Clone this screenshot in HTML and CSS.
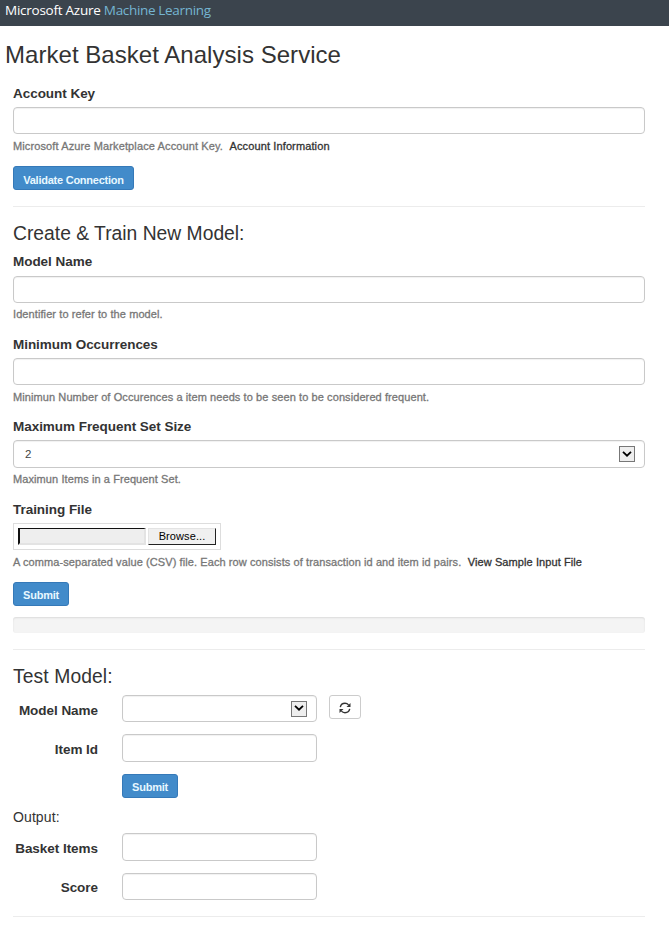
FILE: index.html
```html
<!DOCTYPE html>
<html lang="en">
<head>
<meta charset="utf-8">
<title>Market Basket Analysis Service</title>
<link rel="stylesheet" href="styles.css">
</head>
<body>
<header class="navbar"><span class="brand">Microsoft Azure</span> <span class="product">Machine Learning</span></header>
<h1 class="title">Market Basket Analysis Service</h1>
<main class="content">
  <section class="account">
    <label class="label" for="key">Account Key</label>
    <input class="control" id="key" type="text">
    <p class="help help-key">Microsoft Azure Marketplace Account Key.<a class="link">Account Information</a></p>
    <button class="btn btn-validate">Validate Connection</button>
  </section>
  <section class="train">
    <h2 class="heading">Create &amp; Train New Model:</h2>
    <div class="group g-name">
      <label class="label" for="name">Model Name</label>
      <input class="control" id="name" type="text">
      <p class="help">Identifier to refer to the model.</p>
    </div>
    <div class="group g-min">
      <label class="label" for="min">Minimum Occurrences</label>
      <input class="control" id="min" type="text">
      <p class="help">Minimun Number of Occurences a item needs to be seen to be considered frequent.</p>
    </div>
    <div class="group g-max">
      <span class="label">Maximum Frequent Set Size</span>
      <div class="control select tall"><span>2</span><span class="arrow"><svg viewBox="0 0 10 7"><path d="M1 .8 5 4.7 9 .8" /></svg></span></div>
      <p class="help">Maximun Items in a Frequent Set.</p>
    </div>
    <div class="group g-file">
      <span class="label">Training File</span>
      <div class="file"><span class="file-path"></span><button class="browse">Browse...</button></div>
      <p class="help">A comma-separated value (CSV) file. Each row consists of transaction id and item id pairs.<a class="link">View Sample Input File</a></p>
    </div>
    <button class="btn">Submit</button>
    <div class="progress"></div>
  </section>
  <section class="test">
    <h2 class="heading heading-test">Test Model:</h2>
    <div class="row r-model">
      <span class="label">Model Name</span>
      <div class="control select"><span></span><span class="arrow"><svg viewBox="0 0 10 7"><path d="M1 .8 5 4.7 9 .8" /></svg></span></div>
      <button class="refresh" aria-label="Refresh"><svg viewBox="0 0 12 12"><path class="arc" d="M1.3 5.1C1.8 2.7 3.8 1.3 6 1.3c1.5 0 2.7.6 3.6 1.6M10.7 6.9C10.2 9.3 8.2 10.7 6 10.7c-1.5 0-2.7-.6-3.6-1.6"/><path class="tip" d="M11.5.9v4H7.5zM.5 11.1v-4h4z"/></svg></button>
    </div>
    <div class="row r-item">
      <label class="label" for="item">Item Id</label>
      <input class="control tall" id="item" type="text">
    </div>
    <div class="row r-submit"><span></span><button class="btn">Submit</button></div>
    <p class="output">Output:</p>
    <div class="row r-basket">
      <label class="label" for="basket">Basket Items</label>
      <input class="control tall" id="basket" type="text">
    </div>
    <div class="row r-score">
      <label class="label" for="score">Score</label>
      <input class="control" id="score" type="text">
    </div>
  </section>
</main>
</body>
</html>
```
FILE: styles.css
```css
* { box-sizing: border-box; }
body { margin: 0; background: #fff; color: #333; font-family: "Liberation Sans", Arial, sans-serif; font-size: 13px; overflow: hidden; }
h1, h2, p { margin: 0; font-weight: normal; }
button, input { font-family: inherit; margin: 0; }
.navbar { height: 26px; padding-left: 5px; background: #3b444d; color: #fff; font: 13.5px/21px "Open Sans", "Noto Sans", sans-serif; letter-spacing: -.25px; white-space: nowrap; }
.product { color: #75b5d2; letter-spacing: -.33px; }
.title { height: 57px; padding: 14px 0 0 5px; font-size: 24px; line-height: 30px; letter-spacing: .04px; white-space: nowrap; }
.content { padding: 0 24px 0 13px; }
.label { display: block; height: 20px; margin-bottom: 4px; font-size: 13.5px; font-weight: bold; line-height: 21px; letter-spacing: -.04px; white-space: nowrap; }
.control { display: block; width: 100%; height: 27px; border: 1px solid #c9c9c9; border-radius: 4px; background: #fff; box-shadow: inset 0 1px 1px rgba(0, 0, 0, .06); outline: none; }
.tall { height: 28px; }
.select { display: flex; align-items: center; justify-content: space-between; padding: 0 9px 0 11px; font-size: 11.5px; color: #444; }
.arrow { display: flex; align-items: center; justify-content: center; width: 16px; height: 16px; background: #eee; border: 1px solid #777; }
.arrow svg { width: 10px; height: 7px; fill: none; stroke: #000; stroke-width: 1.8; }
.help { height: 16px; margin-top: 4px; font-size: 11px; line-height: 16px; letter-spacing: .09px; color: #777; white-space: nowrap; -webkit-text-stroke: .3px currentColor; }
.help-key { letter-spacing: .12px; }
.link { color: #333; margin-left: 6.5px; }
.btn { display: block; width: 56px; height: 24px; padding: 3px 0 0; border: 1px solid #3579b8; border-radius: 3px; background: #428bca; color: #e8f8ff; font-size: 11px; font-weight: bold; line-height: 17px; letter-spacing: -.24px; text-align: center; white-space: nowrap; }
.btn-validate { width: 121px; margin-top: 12px; padding-top: 4px; }
.account { height: 124px; border-bottom: 1px solid #ececec; }
.heading { height: 26px; font-size: 19.3px; line-height: 27px; white-space: nowrap; }
.heading-test { letter-spacing: .1px; }
.train { height: 443px; padding-top: 13px; border-bottom: 1px solid #ececec; }
.g-name { margin: 5px 0 12px; }
.g-name .label { margin-bottom: 5px; }
.g-name .help { margin-top: 3px; }
.g-min { margin-bottom: 11px; }
.g-max { margin-bottom: 12px; }
.g-max .help { margin-top: 3px; }
.g-file { margin-bottom: 12px; }
.file { display: flex; gap: 2px; width: 208px; height: 27px; padding: 4px; border: 1px solid #ddd; }
.file-path { width: 128px; height: 17px; background: #eee; border: 2px solid; border-color: #111 #e3e3e3 #e3e3e3 #111; border-top-width: 1.5px; }
.browse { width: 68px; height: 17px; padding: 0; background: #f0f0f0; border: 1px solid; border-color: #e3e3e3 #222 #222 #e3e3e3; font-size: 11px; line-height: 13px; letter-spacing: .1px; color: #000; }
.progress { height: 16px; margin-top: 11px; border-radius: 3px; background: #f4f4f4; box-shadow: inset 0 1px 2px rgba(0, 0, 0, .1); }
.test { height: 267px; padding-top: 13px; border-bottom: 1px solid #ececec; }
.row { display: grid; grid-template-columns: 85px 24px 195px 12px 32px; }
.row > :nth-child(2) { grid-column: 3; }
.row > :nth-child(3) { grid-column: 5; }
.row .label { margin: 5px 0 0; text-align: right; }
.r-model { height: 27px; margin-top: 6px; }
.r-item { height: 28px; margin-top: 12px; }
.r-submit { height: 24px; margin-top: 12px; }
.refresh { display: flex; align-items: center; justify-content: center; height: 24px; padding: 2px 0 0; border: 1px solid #ccc; border-radius: 3px; background: #fff; }
.refresh svg { width: 12px; height: 12px; }
.arc { fill: none; stroke: #333; stroke-width: 1.4; }
.tip { fill: #333; }
.output { height: 20px; margin-top: 9px; font-size: 14px; line-height: 20px; letter-spacing: .1px; }
.r-basket { height: 28px; margin-top: 6px; }
.r-score { height: 27px; margin-top: 12px; }
.r-score .label { margin-top: 4px; }
```
